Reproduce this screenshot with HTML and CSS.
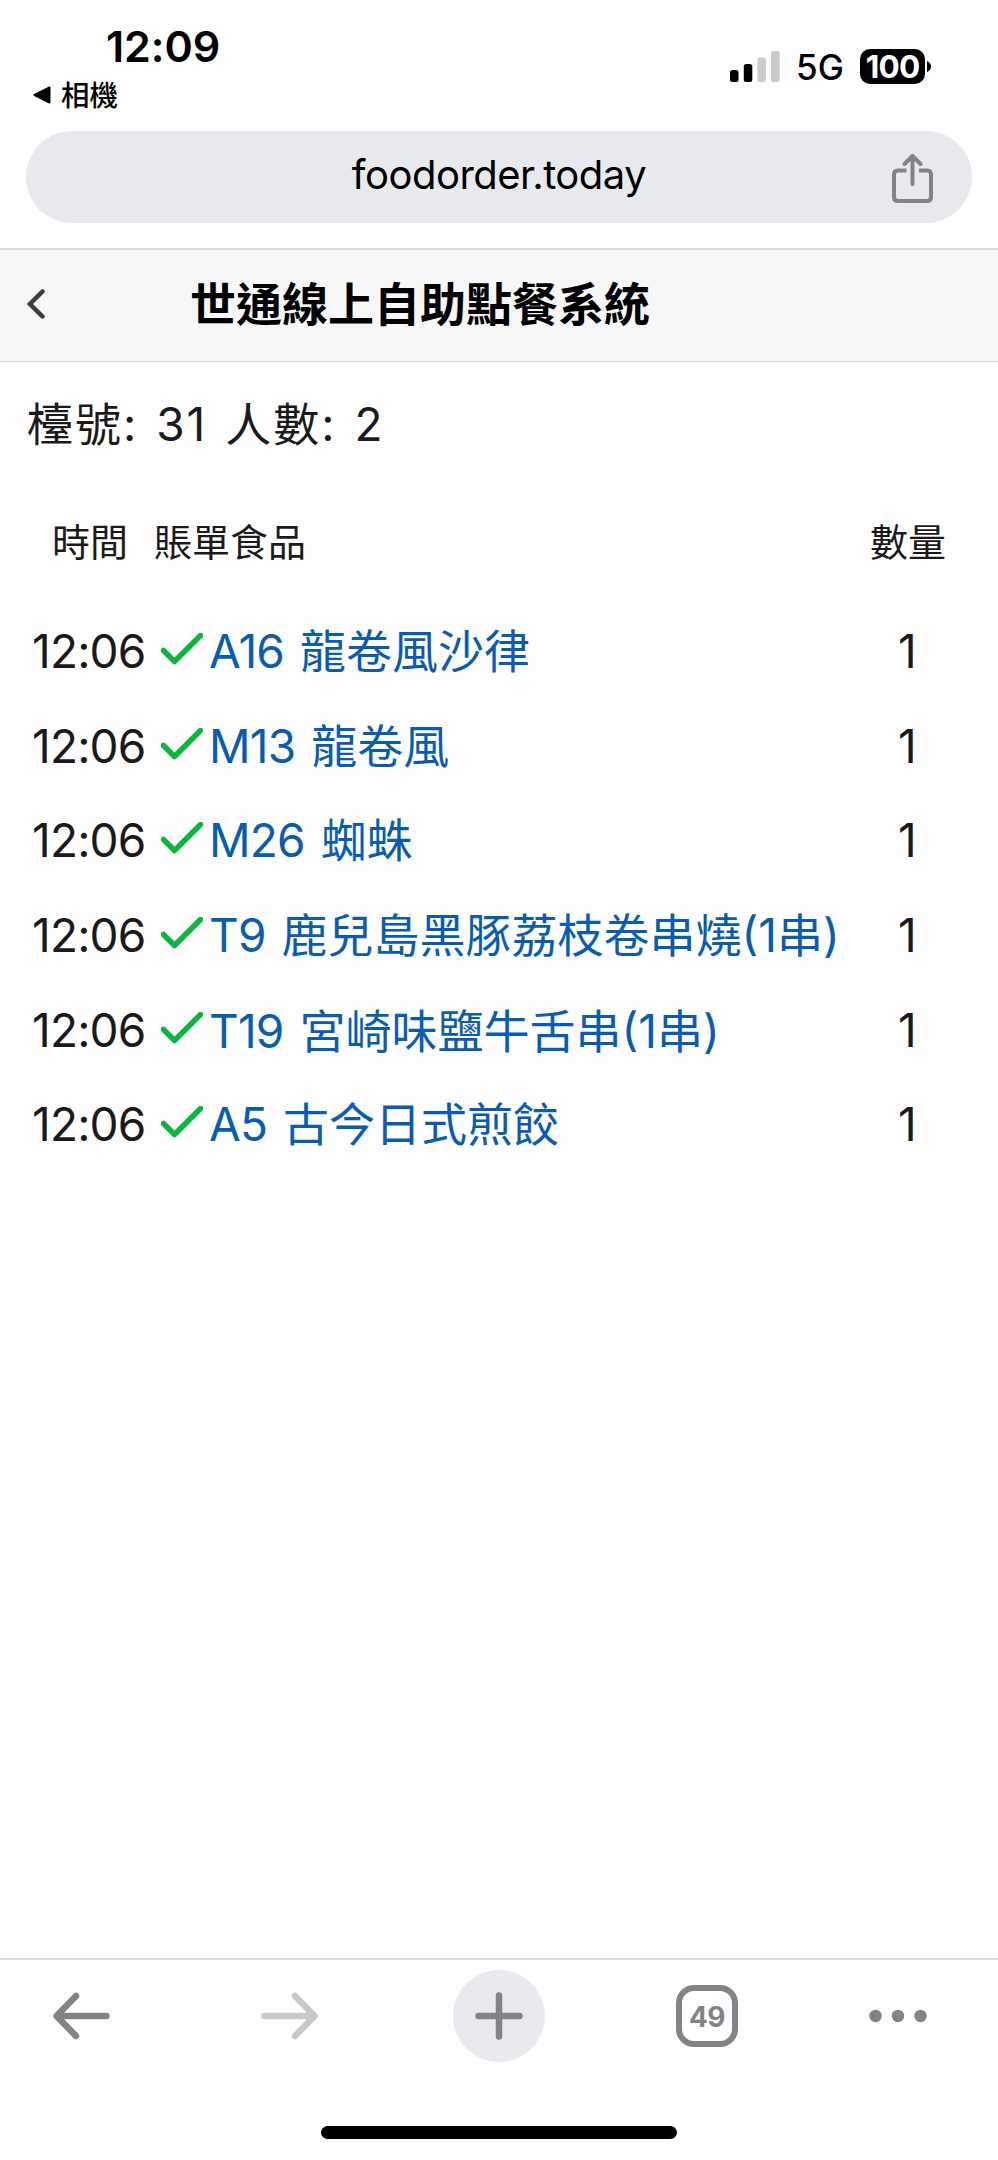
FILE: index.html
```html
<!DOCTYPE html>
<html lang="zh-Hant">
<head>
    <meta charset="UTF-8">
    <meta name="viewport" content="width=device-width, initial-scale=1.0">
    <title>世通線上自助點餐系統</title>
    <link rel="stylesheet" href="styles.css">
</head>
<body>

<div class="status-bar">
    <div class="status-left">
        <div class="clock">12:09</div>
        <div class="back-app">
            <svg width="18" height="18" viewBox="0 0 18 18"><path d="M1.5 9 L16.5 1.5 V16.5 Z" fill="#000" stroke="#000" stroke-width="2" stroke-linejoin="round"/></svg>
            <span>相機</span>
        </div>
    </div>
    <div class="status-right">
        <svg class="signal" width="50" height="31" viewBox="0 0 50 31">
            <rect x="0" y="19" width="8.5" height="12" rx="2.5"/>
            <rect x="13.8" y="13" width="8.5" height="18" rx="2.5"/>
            <rect x="27.4" y="6.5" width="8.5" height="24.5" rx="2.5" fill="#cbcbcb"/>
            <rect x="41" y="0" width="8.7" height="31" rx="2.5" fill="#cbcbcb"/>
        </svg>
        <span class="network">5G</span>
        <span class="battery">100</span>
        <svg class="battery-tip" width="4" height="11" viewBox="0 0 4 11"><path d="M0 0 Q4 2 4 5.5 T0 11 Z"/></svg>
    </div>
</div>

<div class="address-bar">
    <span class="url">foodorder.today</span>
    <svg class="share" width="42" height="50" viewBox="0 0 42 50">
        <path d="M14.5 16.5 H6 Q2 16.5 2 20.5 V43 Q2 47 6 47 H35 Q39 47 39 43 V20.5 Q39 16.5 35 16.5 H27" />
        <path d="M20.5 30 V3 M12.5 10 L20.5 2 L28.5 10" stroke-linecap="round" stroke-linejoin="round"/>
    </svg>
</div>

<div class="page-header">
    <svg class="back" width="18" height="30" viewBox="0 0 18 30"><path d="M15.5 2.5 L3 15 L15.5 27.5"/></svg>
    <h1>世通線上自助點餐系統</h1>
</div>

<div class="table-info">檯號: 31 人數: 2</div>

<div class="bill">
    <div class="bill-head">
        <span class="col-time">時間</span>
        <span class="col-food">賬單食品</span>
        <span class="col-qty">數量</span>
    </div>
    <div id="bill-rows">
        <!-- Data rows will be inserted here -->
    </div>
</div>

<div class="toolbar">
    <svg class="nav-back" width="57" height="48" viewBox="0 0 57 48"><path d="M53.5 24 H4 M23 4 L3.5 24 L23 44"/></svg>
    <svg class="nav-forward" width="57" height="48" viewBox="0 0 57 48"><path d="M3.5 24 H53 M34 4 L53.5 24 L34 44"/></svg>
    <div class="new-tab">
        <svg width="48" height="48" viewBox="0 0 48 48"><path d="M24 3.5 V44.5 M3.5 24 H44.5"/></svg>
    </div>
    <div class="tabs">49</div>
    <svg class="more" width="58" height="14" viewBox="0 0 58 14"><circle cx="6.5" cy="7" r="6.2"/><circle cx="29" cy="7" r="6.2"/><circle cx="51.5" cy="7" r="6.2"/></svg>
</div>
<div class="home-indicator"></div>

<script>
    const items = [
        { time: '12:06', code: 'A16', name: '龍卷風沙律', qty: 1 },
        { time: '12:06', code: 'M13', name: '龍卷風', qty: 1 },
        { time: '12:06', code: 'M26', name: '蜘蛛', qty: 1 },
        { time: '12:06', code: 'T9', name: '鹿兒島黑豚荔枝卷串燒(1串)', qty: 1 },
        { time: '12:06', code: 'T19', name: '宮崎味鹽牛<span class="alt-glyph" lang="ja">舌</span>串(1串)', qty: 1 },
        { time: '12:06', code: 'A5', name: '古今日式煎餃', qty: 1 }
    ];

    document.getElementById('bill-rows').innerHTML = items.map(item => `
        <div class="bill-row">
            <span class="time">${item.time}</span>
            <svg class="tick" width="42" height="32" viewBox="0 0 42 32"><path d="M2.5 17.5 L13.5 28.5 L39.5 2.5"/></svg>
            <span class="food"><span class="code">${item.code}</span> ${item.name}</span>
            <span class="qty">${item.qty}</span>
        </div>`).join('');
</script>

</body>
</html>
```
FILE: styles.css
```css
* {
    box-sizing: border-box;
}
body {
    margin: 0;
    height: 2160px;
    display: flex;
    flex-direction: column;
    background-color: #fefefe;
    color: #1a1a1a;
    font-family: Inter, "Noto Sans CJK TC", sans-serif;
    font-size: 46px;
    white-space: nowrap;
}
svg {
    flex: none;
    display: block;
}

/* Phone status bar */
.status-bar {
    height: 131px;
    flex: none;
    display: flex;
    justify-content: space-between;
    color: #000;
}
.clock {
    padding: 20px 0 0 106px;
    font-size: 43px;
    font-weight: 600;
    line-height: 53px;
    letter-spacing: -0.1px;
}
.back-app {
    display: flex;
    align-items: center;
    gap: 10px;
    padding-left: 33px;
    height: 44px;
    font-size: 28.5px;
    font-weight: 500;
    line-height: 45px;
}
.status-right {
    display: flex;
    align-items: center;
    height: 35px;
    margin: 49px 67px 0 0;
}
.signal {
    margin-right: 16px;
}
.network {
    width: 64px;
    font-size: 35px;
    font-weight: 500;
    line-height: 36px;
}
.battery {
    width: 65px;
    height: 35px;
    margin-right: 2px;
    border-radius: 10px;
    background-color: #000;
    color: #fff;
    font-size: 31.5px;
    font-weight: 700;
    line-height: 35px;
    text-align: center;
    letter-spacing: -0.8px;
}

/* Browser address bar */
.address-bar {
    position: relative;
    flex: none;
    height: 92px;
    margin: 0 26px 25px;
    border-radius: 46px;
    background-color: #e6eaed;
    color: #000;
    text-align: center;
}
.url {
    font-size: 40px;
    line-height: 87px;
    letter-spacing: -0.5px;
}
.share {
    position: absolute;
    right: 38px;
    top: 23px;
    fill: none;
    stroke: #808486;
    stroke-width: 4;
}

/* Site header */
.page-header {
    flex: none;
    display: flex;
    align-items: center;
    height: 114px;
    padding: 0 0 3px 27px;
    border-top: 2px solid #dcdcdc;
    border-bottom: 1px solid #d8d8d8;
    background-color: #f7f7f7;
}
.back {
    fill: none;
    stroke: #3c3c3c;
    stroke-width: 4.5;
    stroke-linecap: round;
}
h1 {
    margin: 0 0 0 145px;
    color: #000;
    font-size: 46px;
    font-weight: 700;
    line-height: 108px;
}
.table-info {
    flex: none;
    padding: 0 27px;
    height: 118px;
    line-height: 124px;
    letter-spacing: 2px;
    word-spacing: 3px;
}

/* Bill */
.bill {
    flex: 1;
}
.bill-head {
    display: flex;
    height: 124px;
    padding: 0 52px;
    font-size: 38px;
    line-height: 124px;
}
.col-time {
    width: 102px;
}
.col-food {
    flex: 1;
}
.bill-row {
    display: flex;
    align-items: center;
    height: 94.7px;
    padding-left: 32px;
    line-height: 95px;
}
.time {
    width: 129px;
    letter-spacing: -0.8px;
}
.tick {
    margin: -5px 6px 0 0;
    fill: none;
    stroke: #0bb53f;
    stroke-width: 5.5;
    stroke-linecap: round;
    stroke-linejoin: round;
}
.food {
    flex: 1;
    color: #0a5cb0;
}
.code {
    letter-spacing: -0.8px;
    margin-right: 3px;
}
.alt-glyph {
    font-family: "Noto Sans CJK JP", sans-serif;
}
.qty {
    width: 100px;
}

/* Browser toolbar */
.toolbar {
    flex: none;
    display: flex;
    align-items: center;
    height: 113px;
    padding-left: 53px;
    border-top: 2px solid #dcdcdc;
}
.toolbar svg {
    fill: none;
    stroke: #808486;
    stroke-width: 6.5;
    stroke-linecap: round;
    stroke-linejoin: round;
}
.toolbar .nav-forward {
    margin-left: 151px;
    stroke: #c9c9c9;
}
.new-tab {
    display: flex;
    align-items: center;
    justify-content: center;
    width: 92px;
    height: 92px;
    margin-left: 135px;
    border-radius: 50%;
    background-color: #e8eaed;
}
.tabs {
    width: 62px;
    height: 62px;
    margin: 0 131px;
    border: 6px solid #808486;
    border-radius: 18px;
    color: #808486;
    font-size: 28px;
    font-weight: 700;
    line-height: 52px;
    text-align: center;
    letter-spacing: -0.5px;
}
.toolbar .more {
    fill: #808486;
    stroke: none;
}
.home-indicator {
    flex: none;
    width: 356px;
    height: 13px;
    margin: 55px auto 21px;
    border-radius: 7px;
    background-color: #000;
}
```
